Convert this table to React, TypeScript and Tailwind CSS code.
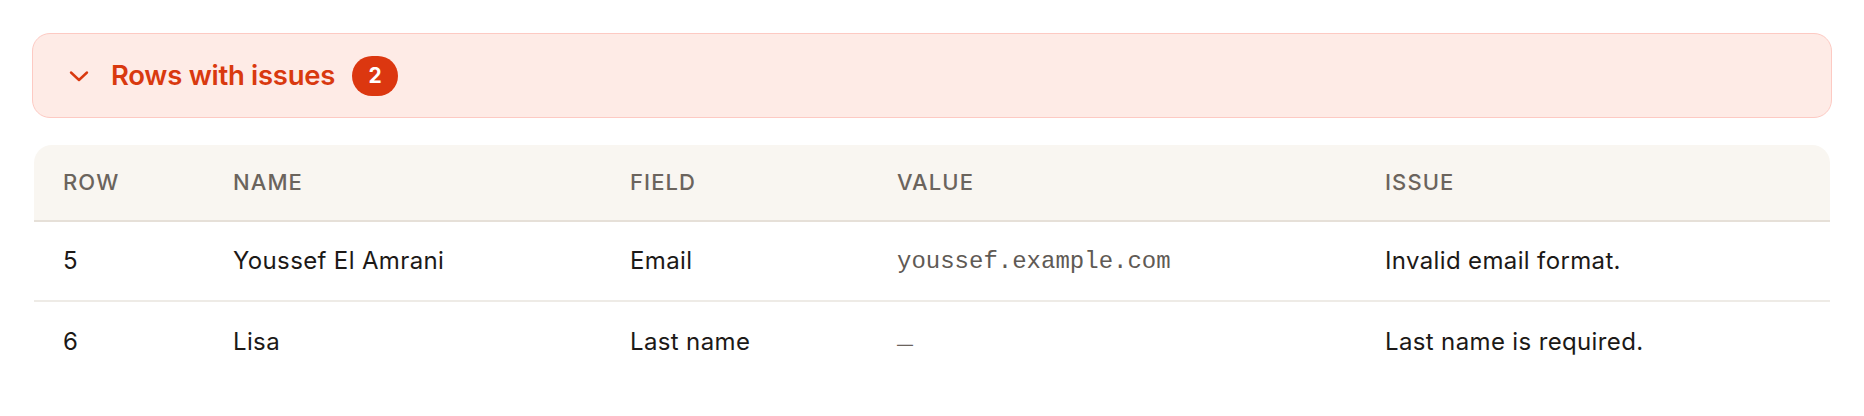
const ROWS = [
  { row: 5, name: "Youssef El Amrani", field: "Email", value: "youssef.example.com", issue: "Invalid email format." },
  { row: 6, name: "Lisa", field: "Last name", value: null, issue: "Last name is required." },
];

const COLS = [
  { label: "Row", w: "w-[170px]" },
  { label: "Name", w: "w-[397px]" },
  { label: "Field", w: "w-[267px]" },
  { label: "Value", w: "w-[488px]" },
  { label: "Issue", w: "" },
];

function Chevron() {
  return (
    <svg width="20" height="12" viewBox="0 0 20 12" fill="none" className="shrink-0">
      <path d="M2 2.5 L10 10 L18 2.5" stroke="#d9390f" strokeWidth="2.4" strokeLinecap="round" strokeLinejoin="round" />
    </svg>
  );
}

export default function App() {
  return (
    <div className="bg-white px-8 pt-[33px] pb-8 font-['Inter',sans-serif]">
      <div className="h-[85px] flex items-center rounded-[18px] border-[1.5px] border-[#fdcac3] bg-[#feebe6] pl-[36px]">
        <Chevron />
        <span className="ml-[22px] text-[27.5px] font-semibold text-[#d9390f] tracking-[-0.01em]">Rows with issues</span>
        <span className="ml-[17px] h-[40px] min-w-[46px] px-3 rounded-full bg-[#dc3710] text-white text-[21px] font-bold flex items-center justify-center">
          2
        </span>
      </div>

      <div className="mt-[27px] mx-[2px]">
        <table className="w-full border-separate border-spacing-0 table-fixed">
          <thead>
            <tr>
              {COLS.map((c, i) => (
                <th
                  key={c.label}
                  className={`${c.w} h-[77px] bg-[#f9f6f1] border-b-2 border-[#e6e0d8] text-left pl-[29px] font-medium uppercase text-[22px] tracking-[0.05em] text-[#6b645d] ${i === 0 ? "rounded-tl-[18px]" : ""} ${i === COLS.length - 1 ? "rounded-tr-[18px]" : ""}`}
                >
                  {c.label}
                </th>
              ))}
            </tr>
          </thead>
          <tbody>
            {ROWS.map((r, i) => {
              const b = i < ROWS.length - 1 ? "border-b-2 border-[#eeebe6]" : "";
              return (
                <tr key={r.row} className="text-[24px] tracking-[0.015em] text-[#1c1917]">
                  <td className={`h-[80px] pl-[29px] ${b}`}>{r.row}</td>
                  <td className={`pl-[29px] ${b}`}>{r.name}</td>
                  <td className={`pl-[29px] ${b}`}>{r.field}</td>
                  <td className={`pl-[29px] ${b}`}>
                    {r.value ? (
                      <span className="font-['Liberation_Mono',monospace] text-[24px] tracking-normal text-[#5f5a55]">{r.value}</span>
                    ) : (
                      <span className="text-[16px] text-[#6b645d]">—</span>
                    )}
                  </td>
                  <td className={`pl-[29px] ${b}`}>{r.issue}</td>
                </tr>
              );
            })}
          </tbody>
        </table>
      </div>
    </div>
  );
}
